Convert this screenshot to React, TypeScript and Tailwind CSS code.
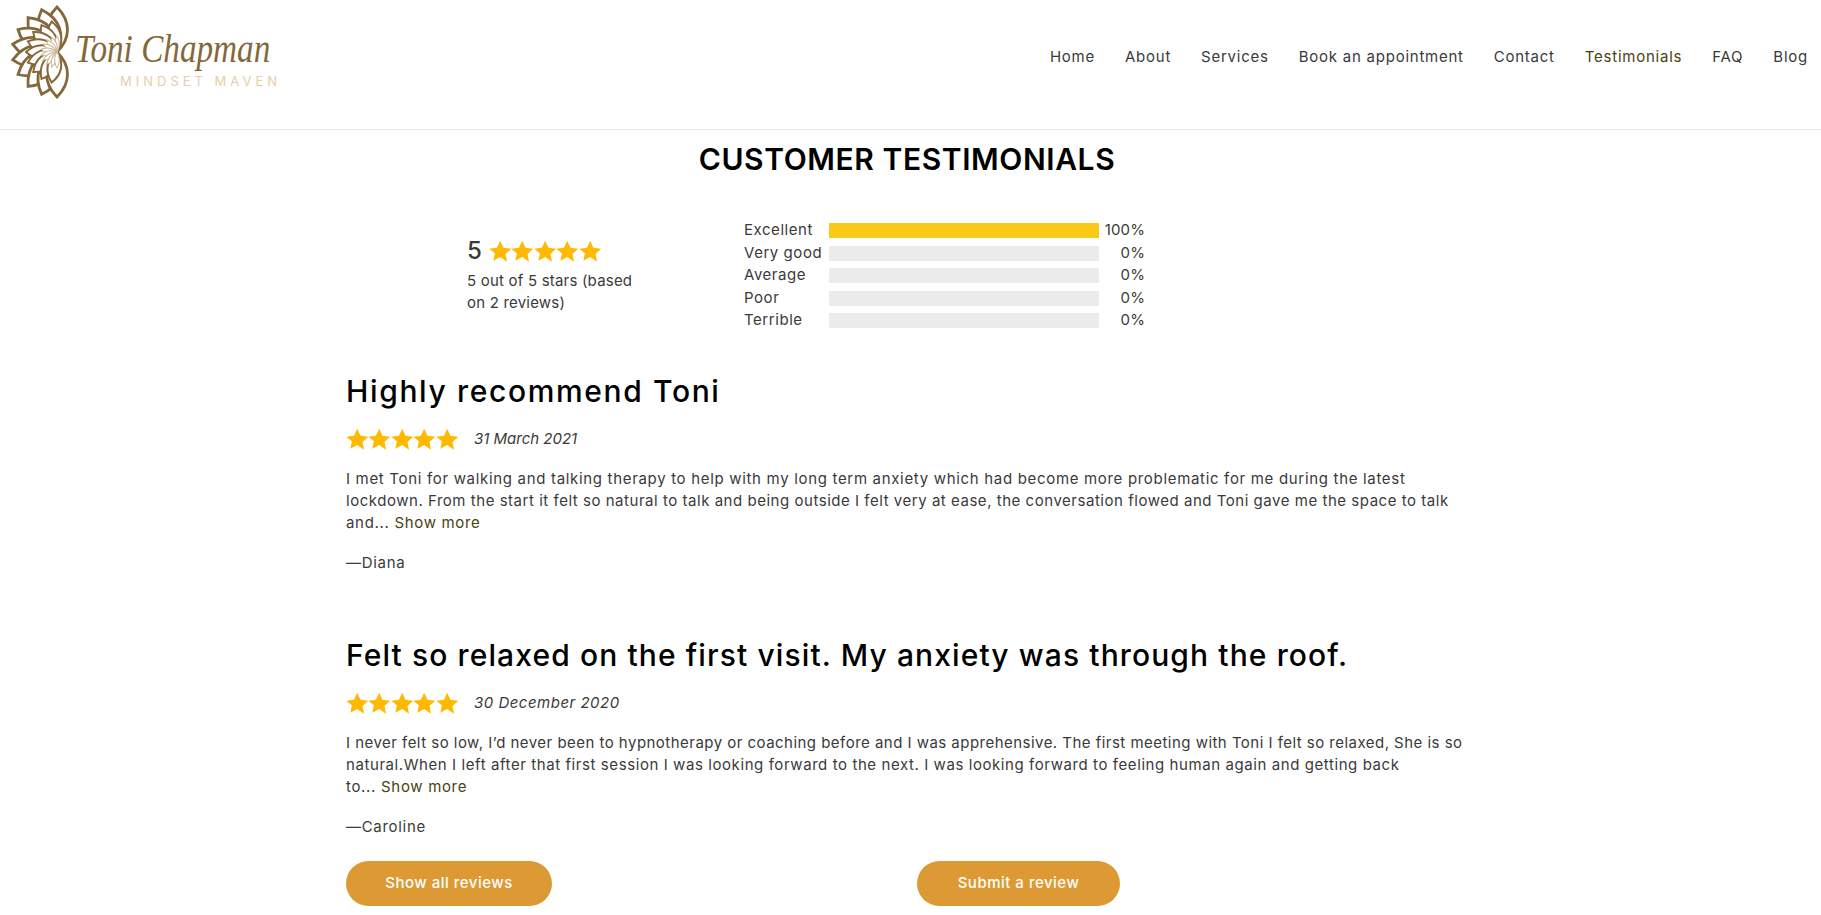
const FONT = "font-['Inter','Liberation_Sans',sans-serif]";

const navItems = ['Home', 'About', 'Services', 'Book an appointment', 'Contact', 'Testimonials', 'FAQ', 'Blog'];

const ratings = [
  { label: 'Excellent', fill: 100 },
  { label: 'Very good', fill: 0 },
  { label: 'Average', fill: 0 },
  { label: 'Poor', fill: 0 },
  { label: 'Terrible', fill: 0 },
];

const reviews = [
  {
    title: 'Highly recommend Toni',
    titleClass: 'tracking-[1.64px]',
    date: '31 March 2021',
    dateClass: 'tracking-[0px]',
    lines: [
      { text: 'I met Toni for walking and talking therapy to help with my long term anxiety which had become more problematic for me during the latest', cls: 'tracking-[0.68px]' },
      { text: 'lockdown. From the start it felt so natural to talk and being outside I felt very at ease, the conversation flowed and Toni gave me the space to talk', cls: 'tracking-[0.53px]' },
    ],
    tail: 'and...',
    author: '—Diana',
  },
  {
    title: 'Felt so relaxed on the first visit. My anxiety was through the roof.',
    titleClass: 'tracking-[1.11px]',
    date: '30 December 2020',
    dateClass: 'tracking-[0.5px]',
    lines: [
      { text: 'I never felt so low, I’d never been to hypnotherapy or coaching before and I was apprehensive. The first meeting with Toni I felt so relaxed, She is so', cls: 'tracking-[0.47px]' },
      { text: 'natural.When I left after that first session I was looking forward to the next. I was looking forward to feeling human again and getting back', cls: 'tracking-[0.58px]' },
    ],
    tail: 'to...',
    author: '—Caroline',
  },
];

function Stars({ className }: { className: string }) {
  return (
    <span className={`flex ${className}`}>
      {[0, 1, 2, 3, 4].map((i) => (
        <svg key={i} viewBox="0 0 24 24" className="h-full aspect-square fill-[#ffb900]">
          <path d="M12 .8l3.5 7.6 8.3 1-6.1 5.7 1.6 8.2L12 18.2l-7.3 4.1 1.6-8.2L.2 9.4l8.3-1z" />
        </svg>
      ))}
    </span>
  );
}

function Logo() {
  const petal = (r: number, w: number) =>
    `M0 0C${-w} ${-r * 0.3} ${-w} ${-r * 0.68} 0 ${-r}C${w} ${-r * 0.68} ${w} ${-r * 0.3} 0 0Z`;
  return (
    <div className="flex">
      <svg viewBox="0 0 75 110" className="h-[110px] w-[75px]">
        {[0, -20, -40, -60, -80, -100, -120, -140, -160, -180].map((a) => (
          <path key={a} d={petal(45, 14)} transform={`translate(57 52) rotate(${a})`} fill="#fff" stroke="#85683a" strokeWidth="2.8" />
        ))}
        {[-10, -30, -50, -70, -90, -110, -130, -150, -170].map((a) => (
          <path key={a} d={petal(31, 9)} transform={`translate(57 52) rotate(${a})`} fill="#fff" stroke="#85683a" strokeWidth="2" />
        ))}
        {[0, -20, -40, -60, -80, -100, -120, -140, -160, -180].map((a) => (
          <path key={a} d={petal(16, 3)} transform={`translate(57 52) rotate(${a})`} fill="#fff" stroke="#c9b693" strokeWidth="1" />
        ))}
      </svg>
      <div className="w-[215px] whitespace-nowrap">
        <p className="mt-[29px] origin-left scale-x-[0.83] font-['Liberation_Serif',serif] text-[40px] leading-[40px] text-[#85683a] italic">Toni Chapman</p>
        <p className="mt-[4px] ml-[45px] text-[13px] leading-[16px] tracking-[4px] text-[#e6cfa9]">MINDSET MAVEN</p>
      </div>
    </div>
  );
}

export default function App() {
  return (
    <div className={`h-[915px] overflow-hidden bg-white text-[#3a3a3a] ${FONT}`}>
      <header className="flex h-[130px] items-start justify-between border-b border-[#ebebeb]">
        <Logo />
        <nav className="mt-[46px] mr-[13px] flex gap-[30px] text-[15px] leading-[22px] tracking-[0.76px] text-[#3a3a3a]">
          {navItems.map((item) => (
            <a key={item} className={item === 'Testimonials' ? 'text-[#4a4212]' : ''}>
              {item}
            </a>
          ))}
        </nav>
      </header>

      <main className="ml-[346px] w-[1122px]">
        <h1 className="mt-[9px] text-center text-[30px] leading-[40px] font-semibold tracking-[0.58px] text-black">CUSTOMER TESTIMONIALS</h1>

        <section className="mt-[44px] ml-[121px] flex items-center">
          <div className="w-[277px] text-[15px] leading-[22px] tracking-[0.2px]">
            <div className="mb-[5px] flex items-center gap-[7px] text-[24px] leading-[28px] font-medium">
              5 <Stars className="h-[22.4px]" />
            </div>
            <p>5 out of 5 stars (based</p>
            <p>on 2 reviews)</p>
          </div>
          <div className="flex flex-col gap-[7.5px] text-[15px] tracking-[0.55px]">
            {ratings.map((r) => (
              <div key={r.label} className="flex h-[15px] items-center">
                <span className="w-[85px] whitespace-nowrap">{r.label}</span>
                <span className="h-[15px] w-[270px] bg-[#ebebeb]">
                  <span className="block h-full bg-[#fcc916]" style={{ width: `${r.fill}%` }} />
                </span>
                <span className="w-[46px] text-right tracking-[0.1px]">{r.fill}%</span>
              </div>
            ))}
          </div>
        </section>

        <div className="mt-[43px] flex flex-col gap-[61px]">
          {reviews.map((r) => (
            <article key={r.title}>
              <h2 className={`text-[30px] leading-[40px] font-medium whitespace-nowrap text-black ${r.titleClass}`}>{r.title}</h2>
              <div className="mt-[16px] flex h-[24px] items-center gap-[16px]">
                <Stars className="h-[22.4px]" />
                <span className={`text-[15px] italic ${r.dateClass}`}>{r.date}</span>
              </div>
              <div className="mt-[17px] text-[15px] leading-[22px] whitespace-nowrap">
                {r.lines.map((l) => (
                  <p key={l.text} className={l.cls}>
                    {l.text}
                  </p>
                ))}
                <p className="tracking-[0.67px]">
                  {r.tail}
                  <a className="ml-[5px] text-[#4a4212]">Show more</a>
                </p>
              </div>
              <p className="mt-[18px] text-[15px] leading-[22px] tracking-[0.7px]">{r.author}</p>
            </article>
          ))}
        </div>

        <div className="mt-[23px] flex">
          <button className="h-[45px] w-[206px] rounded-[23px] bg-[#dd9933] text-[15px] font-medium tracking-[0.5px] text-white">Show all reviews</button>
          <button className="ml-[365px] h-[45px] w-[203px] rounded-[23px] bg-[#dd9933] text-[15px] font-medium tracking-[0.5px] text-white">Submit a review</button>
        </div>
      </main>
    </div>
  );
}
